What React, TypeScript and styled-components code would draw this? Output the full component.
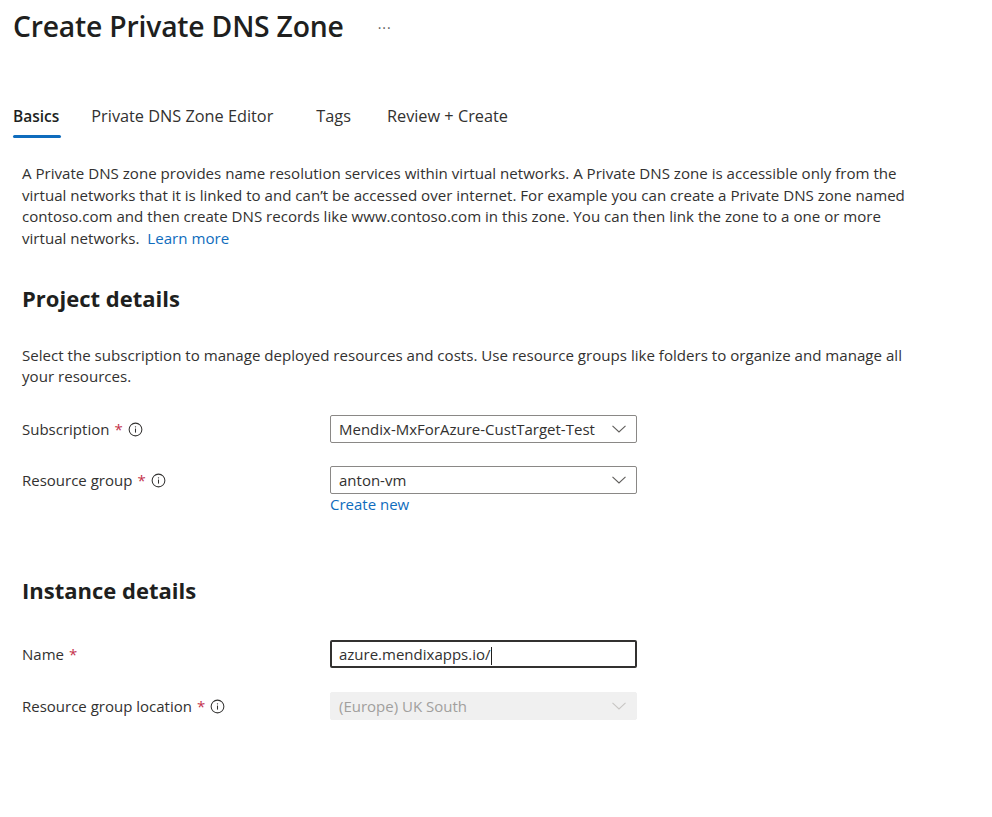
import React from "react";
import styled, { createGlobalStyle } from "styled-components";

const Global = createGlobalStyle`
  html, body { margin: 0; padding: 0; background: #fff; }
  body { font-family: "Open Sans", "Noto Sans", sans-serif; color: #323130; }
`;

const Page = styled.div`
  width: 992px;
  height: 817px;
  box-sizing: border-box;
  padding: 8px 0 0 13px;
`;

const TitleRow = styled.div`
  display: flex;
  align-items: center;
  gap: 34px;
  height: 36px;
`;

const Title = styled.h1`
  margin: 0;
  font-size: 28.3px;
  font-weight: 600;
  color: #201f1e;
  letter-spacing: -0.2px;
  line-height: 36px;
`;

const More = styled.span`
  font-size: 14px;
  color: #605e5c;
  letter-spacing: 1px;
  margin-top: 2px;
`;

const Tabs = styled.div`
  display: flex;
  margin-top: 60px;
  height: 36px;
`;

const Tab = styled.div<{ $active?: boolean; $gap: number }>`
  position: relative;
  margin-right: ${(p) => p.$gap}px;
  font-size: ${(p) => (p.$active ? "15.5px" : "16.3px")};
  font-weight: ${(p) => (p.$active ? 600 : 400)};
  color: ${(p) => (p.$active ? "#201f1e" : "#323130")};
  line-height: 24px;
  &::after {
    content: "";
    display: ${(p) => (p.$active ? "block" : "none")};
    position: absolute;
    left: 0;
    right: -2px;
    top: 31px;
    height: 3px;
    border-radius: 2px;
    background: #0f6cbd;
  }
`;

const Content = styled.div`
  padding-left: 9px;
  width: 960px;
`;

const Para = styled.p<{ $top: number }>`
  margin: ${(p) => p.$top}px 0 0;
  font-size: 15.1px;
  line-height: 21.67px;
  color: #323130;
  white-space: nowrap;
`;

const Link = styled.a`
  color: #0f6cbd;
  text-decoration: none;
  margin-left: 4px;
`;

const Section = styled.h2<{ $top: number }>`
  margin: ${(p) => p.$top}px 0 0;
  font-size: 22px;
  font-weight: 700;
  color: #201f1e;
  line-height: 28px;
`;

const Row = styled.div<{ $top: number }>`
  display: grid;
  grid-template-columns: 308px 307px;
  align-items: start;
  margin-top: ${(p) => p.$top}px;
`;

const Label = styled.div`
  display: flex;
  align-items: center;
  gap: 5px;
  height: 28px;
  font-size: 15px;
  color: #323130;
`;

const Req = styled.span`
  color: #c4314b;
`;

const Field = styled.div<{ $disabled?: boolean; $focus?: boolean }>`
  box-sizing: border-box;
  height: 28px;
  display: flex;
  align-items: center;
  justify-content: space-between;
  padding: 0 9px 0 ${(p) => (p.$focus ? "7px" : "8px")};
  font-size: 15px;
  border: ${(p) =>
    p.$disabled ? "1px solid #f0f0f0" : p.$focus ? "2px solid #323130" : "1px solid #8a8886"};
  border-radius: 2px;
  background: ${(p) => (p.$disabled ? "#f0f0f0" : "#fff")};
  color: ${(p) => (p.$disabled ? "#a19f9d" : "#323130")};
`;

const Caret = styled.span`
  display: inline-block;
  width: 1px;
  height: 18px;
  background: #201f1e;
  margin-left: 1px;
  vertical-align: middle;
`;

const CreateNew = styled.a`
  display: block;
  line-height: 20px;
  font-size: 15px;
  color: #0f6cbd;
  text-decoration: none;
`;

const Info = ({ color = "#323130" }: { color?: string }) => (
  <svg width="15" height="15" viewBox="0 0 16 16" fill="none">
    <circle cx="8" cy="8" r="6.8" stroke={color} strokeWidth="1.1" />
    <rect x="7.45" y="7" width="1.1" height="4.3" fill={color} />
    <circle cx="8" cy="5.1" r="0.7" fill={color} />
  </svg>
);

const Chevron = ({ color = "#605e5c" }: { color?: string }) => (
  <svg width="16" height="10" viewBox="0 0 16 10" fill="none">
    <path d="M1.5 1.8 L8 8 L14.5 1.8" stroke={color} strokeWidth="1.1" />
  </svg>
);

export default function App() {
  return (
    <>
      <Global />
      <Page>
        <TitleRow>
          <Title>Create Private DNS Zone</Title>
          <More>···</More>
        </TitleRow>
        <Tabs>
          <Tab $active $gap={32}>Basics</Tab>
          <Tab $gap={43}>Private DNS Zone Editor</Tab>
          <Tab $gap={36}>Tags</Tab>
          <Tab $gap={0}>Review + Create</Tab>
        </Tabs>
        <Content>
          <Para $top={23}>
            A Private DNS zone provides name resolution services within virtual networks. A Private DNS zone is accessible only from the
            <br />
            virtual networks that it is linked to and can’t be accessed over internet. For example you can create a Private DNS zone named
            <br />
            contoso.com and then create DNS records like www.contoso.com in this zone. You can then link the zone to a one or more
            <br />
            virtual networks. <Link href="#">Learn more</Link>
          </Para>
          <Section $top={34}>Project details</Section>
          <Para $top={33}>
            Select the subscription to manage deployed resources and costs. Use resource groups like folders to organize and manage all
            <br />
            your resources.
          </Para>
          <Row $top={27}>
            <Label>
              Subscription <Req>*</Req> <Info />
            </Label>
            <Field>
              <span>Mendix-MxForAzure-CustTarget-Test</span>
              <Chevron />
            </Field>
          </Row>
          <Row $top={23}>
            <Label>
              Resource group <Req>*</Req> <Info />
            </Label>
            <div>
              <Field>
                <span>anton-vm</span>
                <Chevron />
              </Field>
              <CreateNew href="#">Create new</CreateNew>
            </div>
          </Row>
          <Section $top={62}>Instance details</Section>
          <Row $top={36}>
            <Label>
              Name <Req>*</Req>
            </Label>
            <Field $focus>
              <span>
                azure.mendixapps.io/
                <Caret />
              </span>
            </Field>
          </Row>
          <Row $top={24}>
            <Label>
              Resource group location <Req>*</Req> <Info />
            </Label>
            <Field $disabled>
              <span>(Europe) UK South</span>
              <Chevron color="#c8c6c4" />
            </Field>
          </Row>
        </Content>
      </Page>
    </>
  );
}
